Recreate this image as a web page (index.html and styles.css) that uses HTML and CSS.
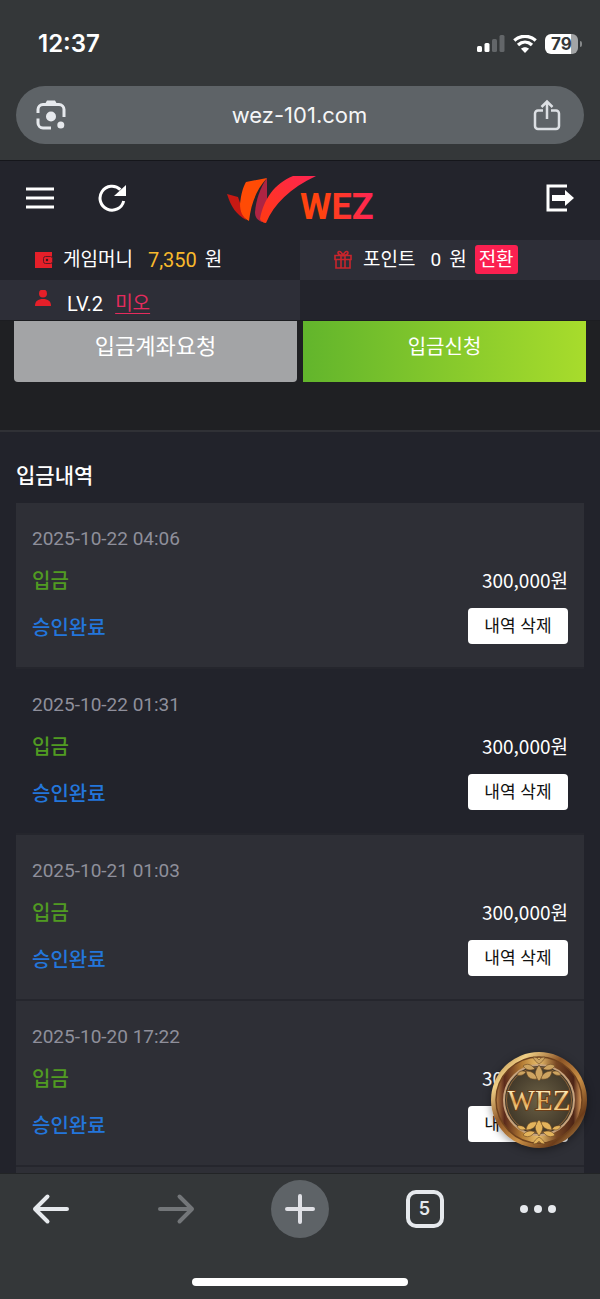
FILE: index.html
```html
<!DOCTYPE html>
<html lang="ko">
<head>
  <meta charset="UTF-8">
  <meta name="viewport" content="width=device-width, initial-scale=1">
  <title>WEZ</title>
  <link rel="stylesheet" href="styles.css">
</head>
<body>
  <div class="page">
    <div class="status">
      <span class="time">12:37</span>
      <div class="status-icons">
        <svg width="28" height="18" viewBox="0 0 28 18">
          <rect x="0" y="11" width="5" height="6" rx="1.500" fill="#fff"/>
          <rect x="7.500" y="8" width="5" height="9" rx="1.500" fill="#fff"/>
          <rect x="15" y="4" width="5" height="13" rx="1.500" fill="#636669"/>
          <rect x="22.500" y="0" width="5" height="17" rx="1.500" fill="#636669"/>
        </svg>
        <svg width="24" height="18" viewBox="0 0 24 18">
          <path d="M1.300 5.500C7.500-.1 16.500-.1 22.700 5.500M5 10c4.200-3.800 9.800-3.800 14 0" fill="none" stroke="#fff" stroke-width="3.300"/>
          <path d="M12 18l-4-4.200c2.400-2 5.600-2 8 0z" fill="#fff"/>
        </svg>
        <span class="battery">79</span>
      </div>
    </div>
    <div class="address">
      <button class="icon-btn" aria-label="렌즈">
        <svg width="30" height="30" viewBox="0 0 30 30">
          <path d="M2 13V9.500a5 5 0 0 1 5-5h16a5 5 0 0 1 5 5V17M2 18.500v4.500a5 5 0 0 0 5 5h8" fill="none" stroke="#e6e9ed" stroke-width="3"/>
          <path d="M9 4l2-3.500h8L21 4z" fill="#e6e9ed"/>
          <circle cx="15" cy="16.500" r="5" fill="#e6e9ed"/>
          <circle cx="24.800" cy="25" r="3.500" fill="#e6e9ed"/>
        </svg>
      </button>
      <span class="url">wez-101.com</span>
      <button class="icon-btn" aria-label="공유">
        <svg width="28" height="32" viewBox="0 0 28 32">
          <path d="M10 11.500H5a3 3 0 0 0-3 3V27a3 3 0 0 0 3 3h18a3 3 0 0 0 3-3V14.500a3 3 0 0 0-3-3h-5M14 20V3M8.500 8L14 2.500 19.500 8" fill="none" stroke="#dcdfe3" stroke-width="2.500"/>
        </svg>
      </button>
    </div>

    <header class="head">
      <div class="head-left">
        <button class="icon-btn" aria-label="메뉴">
          <svg width="28" height="28" viewBox="0 0 28 28">
            <path d="M0 5h28M0 14h28M0 23h28" stroke="#fff" stroke-width="3"/>
          </svg>
        </button>
        <button class="icon-btn" aria-label="새로고침">
          <svg width="28" height="28" viewBox="0 0 28 28">
            <path d="M22.400 5.600A12 12 0 1 0 25.700 17" fill="none" stroke="#fff" stroke-width="3"/>
            <path d="M28 1v11H16z" fill="#fff"/>
          </svg>
        </button>
      </div>
      <a class="logo" href="#" aria-label="WEZ">
        <svg width="150" height="54" viewBox="-1 -4 150 54">
          <defs>
            <linearGradient id="swoosh" x1="0" y1="1" x2="1" y2="0">
              <stop offset="0" stop-color="#ff3a12"/>
              <stop offset="1" stop-color="#ff2452"/>
            </linearGradient>
            <linearGradient id="word" x1="0" y1="0" x2="1" y2="0">
              <stop offset="0.300" stop-color="#ff4310"/>
              <stop offset="1" stop-color="#ff2456"/>
            </linearGradient>
          </defs>
          <path d="M1 19l11 3 8 23C10 39 5 32 1 19z" fill="#c81913"/>
          <path d="M41 3v28l-5 16c-5-2-7-5-7-10 1-12 5-24 12-34z" fill="#ae2443"/>
          <path d="M20 7l21-4C30 15 25 29 23 46c-7-4-9-10-9-17 1-10 3-17 6-22z" fill="#ff4b05"/>
          <path d="M67 1h23C64 13 48 29 40 48c-3 0-5-2-6-4C38 24 48 9 67 1z" fill="url(#swoosh)"/>
          <text class="logo-text" x="74" y="44" fill="url(#word)">WEZ</text>
        </svg>
      </a>
      <button class="icon-btn head-right" aria-label="로그아웃">
        <svg width="28" height="28" viewBox="0 0 28 28">
          <path d="M21 2H2v24h19" fill="none" stroke="#fff" stroke-width="3"/>
          <path d="M6 11h13V6l9 8-9 8v-5H6z" fill="#fff"/>
        </svg>
      </button>
    </header>

    <div class="info">
      <div class="info-cell">
        <svg class="info-icon" width="20" height="20" viewBox="0 0 20 20">
          <path d="M2 2h17v16H2z" fill="#e51f29"/>
          <rect x="10.500" y="6.500" width="9" height="7" rx="2" fill="#e51f29" stroke="#5b1b25"/>
          <circle cx="14" cy="10" r="1.200" fill="#3a1820"/>
        </svg>
        <span>게임머니</span><b class="money">7,350</b><span>원</span>
      </div>
      <div class="info-cell light">
        <svg class="info-icon" width="20" height="20" viewBox="0 0 20 20">
          <path d="M2 5.500h16v4H2zM3 9.500h14V18H3zM8 5.500V18M12 5.500V18M10 5.500C5 5.500 4 2 6 1.500S9 3 10 5.500c1-2.500 2-4.500 4-4s1 4-4 4z" fill="none" stroke="#c8252c" stroke-width="1.600"/>
        </svg>
        <span>포인트</span><b class="point">0</b><span>원</span>
        <button class="convert">전환</button>
      </div>
      <div class="info-cell light user-cell">
        <svg class="info-icon" width="20" height="20" viewBox="0 0 20 20">
          <circle cx="10" cy="3.500" r="4" fill="#e51f29"/>
          <path d="M2 16c0-5 3-7 8-7s8 2 8 7z" fill="#e51f29"/>
        </svg>
        <span class="level">LV.2</span><a class="user" href="#">미오</a>
      </div>
      <div class="info-cell"></div>
    </div>

    <main class="content">
      <div class="actions">
        <button class="action account">입금계좌요청</button>
        <button class="action apply">입금신청</button>
      </div>
      <h2 class="title">입금내역</h2>
      <ul class="list">
        <li class="item odd">
          <span class="date">2025-10-22 04:06</span>
          <div class="row"><span class="type">입금</span><span class="amount">300,000원</span></div>
          <div class="row last"><span class="state">승인완료</span><button class="del">내역 삭제</button></div>
        </li>
        <li class="item">
          <span class="date">2025-10-22 01:31</span>
          <div class="row"><span class="type">입금</span><span class="amount">300,000원</span></div>
          <div class="row last"><span class="state">승인완료</span><button class="del">내역 삭제</button></div>
        </li>
        <li class="item odd">
          <span class="date">2025-10-21 01:03</span>
          <div class="row"><span class="type">입금</span><span class="amount">300,000원</span></div>
          <div class="row last"><span class="state">승인완료</span><button class="del">내역 삭제</button></div>
        </li>
        <li class="item odd">
          <span class="date">2025-10-20 17:22</span>
          <div class="row"><span class="type">입금</span><span class="amount">300,000원</span></div>
          <div class="row last"><span class="state">승인완료</span><button class="del">내역 삭제</button></div>
        </li>
        <li class="item odd"></li>
      </ul>
      <button class="coin" aria-label="WEZ">
        <svg width="96" height="96" viewBox="0 0 96 96">
          <defs>
            <linearGradient id="rim" x1="0" y1="0" x2="1" y2="1">
              <stop offset="0" stop-color="#8a5a24"/>
              <stop offset="0.200" stop-color="#f0cf85"/>
              <stop offset="0.400" stop-color="#8c5426"/>
              <stop offset="0.600" stop-color="#c98f45"/>
              <stop offset="0.800" stop-color="#6b3c1a"/>
              <stop offset="1" stop-color="#e8bd68"/>
            </linearGradient>
            <linearGradient id="band" x1="0" y1="0" x2="1" y2="0">
              <stop offset="0" stop-color="#b98145"/>
              <stop offset="0.100" stop-color="#5b2a1b"/>
              <stop offset="0.300" stop-color="#b47c34"/>
              <stop offset="0.500" stop-color="#eabf6b"/>
              <stop offset="0.700" stop-color="#794824"/>
              <stop offset="0.900" stop-color="#4c2416"/>
              <stop offset="1" stop-color="#e6a560"/>
            </linearGradient>
            <radialGradient id="face">
              <stop offset="0" stop-color="#6b6045"/>
              <stop offset="1" stop-color="#403728"/>
            </radialGradient>
            <linearGradient id="gold" x1="0" y1="0" x2="0" y2="1">
              <stop offset="0.200" stop-color="#fff0c0"/>
              <stop offset="0.550" stop-color="#e0a755"/>
              <stop offset="0.900" stop-color="#fbdf9f"/>
            </linearGradient>
            <g id="leaf">
              <path d="M48 29c-5-5-5-9 0-16 5 7 5 11 0 16z"/>
              <path d="M46 27c-7 1-10-2-11-8 6 0 10 3 11 8zM50 27c7 1 10-2 11-8-6 0-10 3-11 8z"/>
              <path d="M44 17c-4-5-8-6-12-3 3 4 7 5 12 3zM52 17c4-5 8-6 12-3-3 4-7 5-12 3z"/>
              <path d="M35 20c-4-2-7-1-9 3 4 1 7 0 9-3zM61 20c4-2 7-1 9 3-4 1-7 0-9-3z"/>
              <path d="M48 12c-3-2-5-4-6-7 3 0 5 1 6 3 1-2 3-3 6-3-1 3-3 5-6 7z"/>
            </g>
          </defs>
          <circle cx="48" cy="48" r="48" fill="url(#rim)"/>
          <circle cx="48" cy="48" r="43" fill="url(#band)" stroke="#70431e" stroke-width="1.500"/>
          <circle cx="48" cy="48" r="35" fill="url(#face)" stroke="#c6a27c" stroke-width="2"/>
          <circle cx="48" cy="48" r="32.500" fill="none" stroke="#8c6238" stroke-width="1"/>
          <use href="#leaf" fill="#cda461" stroke="#674521" stroke-width="0.600"/>
          <use href="#leaf" fill="#e3b35c" stroke="#674521" stroke-width="0.600" transform="matrix(1 0 0 -1 0 97)"/>
          <text class="coin-text" x="48" y="58" text-anchor="middle" fill="url(#gold)" stroke="#6b3d18">WEZ</text>
        </svg>
      </button>
    </main>

    <nav class="toolbar">
      <div class="tools">
        <button class="tool" aria-label="뒤로">
          <svg width="38" height="32" viewBox="0 0 38 32">
            <path d="M35 16H3M15.500 3.500L3 16l12.500 12.500" fill="none" stroke="#e6e9ed" stroke-width="4" stroke-linecap="round" stroke-linejoin="round"/>
          </svg>
        </button>
        <button class="tool" aria-label="앞으로">
          <svg width="38" height="32" viewBox="0 0 38 32">
            <path d="M3 16h32M22.500 3.500L35 16 22.500 28.500" fill="none" stroke="#737679" stroke-width="4" stroke-linecap="round" stroke-linejoin="round"/>
          </svg>
        </button>
        <button class="tool plus" aria-label="새 탭">
          <svg width="30" height="30" viewBox="0 0 30 30">
            <path d="M2 15h26M15 2v26" stroke="#e0e1e6" stroke-width="4" stroke-linecap="round"/>
          </svg>
        </button>
        <button class="tool"><span class="tabs">5</span></button>
        <button class="tool more" aria-label="더보기">
          <svg width="36" height="10" viewBox="0 0 36 10">
            <circle cx="4" cy="5" r="4" fill="#e6e9ed"/>
            <circle cx="18" cy="5" r="4" fill="#e6e9ed"/>
            <circle cx="32" cy="5" r="4" fill="#e6e9ed"/>
          </svg>
        </button>
      </div>
      <div class="home-bar"></div>
    </nav>
  </div>
</body>
</html>
```
FILE: styles.css
```css
* {
  box-sizing: border-box;
}
body {
  margin: 0;
  background: #22232b;
  color: #fff;
  font-family: Roboto, "Noto Sans CJK KR", sans-serif;
}
button {
  margin: 0;
  padding: 0;
  border: 0;
  background: none;
  color: inherit;
  font-family: inherit;
}
svg {
  display: block;
}
.page {
  height: 100vh;
  display: flex;
  flex-direction: column;
  background: #343739;
}

/* 상태바 */
.status {
  height: 86px;
  flex: none;
  display: flex;
  justify-content: space-between;
  align-items: center;
  padding: 2px 19px 0 38px;
}
.time {
  font: 600 24px/28px Inter, sans-serif;
}
.status-icons {
  display: flex;
  align-items: center;
  gap: 8px;
}
.battery {
  position: relative;
  width: 33px;
  border-radius: 6px;
  background: linear-gradient(90deg, #fff 80%, #a2a4a6 80%);
  color: #343739;
  font: 700 17px/20px Inter, sans-serif;
  text-align: center;
  margin-right: 3px;
}
.battery::after {
  content: "";
  position: absolute;
  right: -4px;
  top: 7px;
  width: 2px;
  height: 6px;
  border-radius: 0 2px 2px 0;
  background: #85888a;
}
.address {
  height: 58px;
  flex: none;
  display: flex;
  justify-content: space-between;
  align-items: center;
  margin: 0 16px 16px;
  padding: 0 23px 0 20px;
  border-radius: 29px;
  background: #5e6367;
}
.url {
  font: 400 22px/28px Inter, sans-serif;
  color: #f5f6f7;
}

/* 헤더 */
.head {
  height: 80px;
  flex: none;
  display: grid;
  grid-template-columns: 1fr auto 1fr;
  align-items: center;
  padding: 0 26px 6px;
  border-top: 1px solid #15161b;
  background: #23242c;
}
.head-left {
  display: flex;
  gap: 44px;
}
.head-right {
  justify-self: end;
}
.logo-text {
  font: 700 36px Roboto, sans-serif;
}
.info {
  flex: none;
  display: grid;
  grid-template-columns: 1fr 1fr;
  background: #23242c;
  border-bottom: 1px solid #1c1d21;
  font-size: 19px;
  line-height: 28px;
}
.info-cell {
  height: 40px;
  display: flex;
  align-items: center;
  padding: 0 0 1px 33px;
  white-space: nowrap;
}
.light {
  background: #2d2e37;
}
.user-cell {
  padding-bottom: 0;
  align-items: flex-end;
}
.user-cell .info-icon {
  margin-bottom: 10px;
}
.info-icon {
  margin-right: 10px;
}
.money,
.point {
  margin: 0 8px 0 15px;
  font-weight: 400;
}
.money {
  color: #f8b92c;
  font-size: 20px;
}
.convert {
  height: 29px;
  margin-left: 8px;
  padding: 0 4px;
  border-radius: 3px;
  background: #fb2050;
  font-size: 19px;
  line-height: 28px;
}
.level {
  margin: 0 12px 2px 4px;
  font-size: 20px;
}
.user {
  margin-bottom: 2px;
  color: #e52b5d;
  text-underline-offset: 3px;
}

/* 입금 내용 */
.content {
  position: relative;
  flex: 1;
  min-height: 0;
  overflow: hidden;
  background: #22232b;
}
.actions {
  height: 111px;
  display: flex;
  align-items: flex-start;
  gap: 6px;
  padding: 0 14px;
  border-bottom: 2px solid #303136;
  background: #1f2023;
}
.action {
  flex: 1;
  height: 61px;
  padding-bottom: 10px;
  line-height: 28px;
}
.account {
  border-radius: 0 0 4px 4px;
  background: #a3a4a6;
  font-size: 22px;
}
.apply {
  background: linear-gradient(90deg, #62b52c, #a8dc2c);
  font-size: 20px;
}
.title {
  margin: 0 16px;
  padding: 29px 0 12px;
  font-size: 21px;
  line-height: 30px;
  font-weight: 500;
}
.list {
  margin: 0 16px;
  padding: 0;
  list-style: none;
}
.item {
  min-height: 166px;
  padding: 16px 16px 14px;
  border-bottom: 2px solid #25262d;
}
.odd {
  background: #2e2f36;
}
.date {
  display: block;
  color: #8f8f9b;
  font-size: 19px;
  line-height: 40px;
}
.row {
  height: 40px;
  display: flex;
  justify-content: space-between;
  align-items: center;
  font-family: "Noto Sans CJK KR", sans-serif;
  font-size: 20px;
}
.last {
  height: 54px;
}
.type {
  color: #519b22;
}
.state {
  color: #2376db;
}
.type,
.state {
  font-weight: 500;
}
.amount {
  font-size: 19px;
}
.del {
  width: 100px;
  height: 36px;
  padding-bottom: 3px;
  border-radius: 4px;
  background: #fff;
  color: #111;
  font-size: 17px;
}
.coin {
  position: absolute;
  right: 13px;
  bottom: 25px;
  border-radius: 50%;
  box-shadow: 0 2px 8px rgba(0, 0, 0, 0.4);
}
.coin-text {
  font: 400 29px "Liberation Serif", serif;
  paint-order: stroke;
  stroke-width: 2;
}

/* 하단 툴바 */
.toolbar {
  flex: none;
  border-top: 1px solid #222426;
  background: #343739;
}
.tools {
  display: flex;
  justify-content: space-between;
  align-items: center;
  padding: 6px 22px 0;
}
.tool {
  width: 58px;
  height: 58px;
  display: flex;
  justify-content: center;
  align-items: center;
}
.plus {
  border-radius: 50%;
  background: #5e6367;
}
.more {
  justify-content: flex-start;
}
.tabs {
  width: 38px;
  border: 4px solid #e6e9ed;
  border-radius: 10px;
  color: #e6e9ed;
  font: 600 18px/30px Inter, sans-serif;
}
.home-bar {
  width: 36%;
  height: 8px;
  margin: 40px auto 13px;
  border-radius: 4px;
  background: #fff;
}
```
